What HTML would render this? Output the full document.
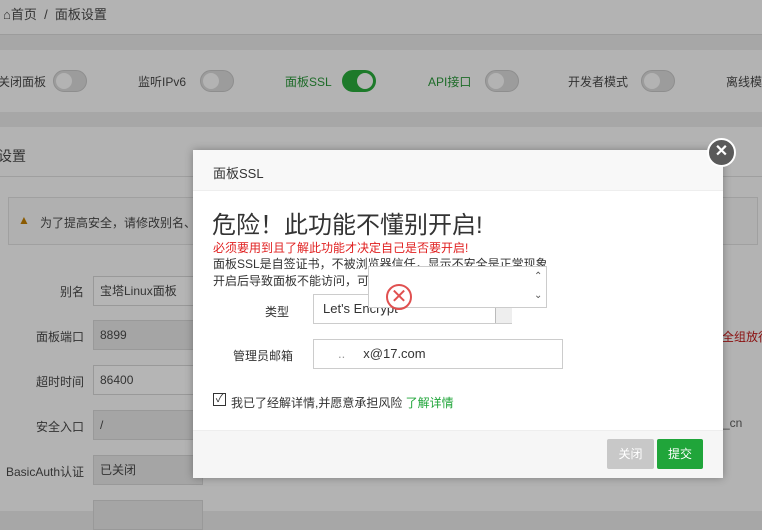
<!DOCTYPE html>
<html><head><meta charset="utf-8"><style>
*{box-sizing:border-box;margin:0;padding:0}
body{width:762px;height:511px;overflow:hidden;position:relative;background:#a7a7a7;font-family:"Liberation Sans","Noto Sans CJK SC",sans-serif;font-size:12px;color:#333}
.abs{position:absolute;white-space:nowrap}
.light{background:#b3b3b3}
.tg{position:absolute;top:70px;width:34px;height:22px;border-radius:11px;background:#9c9c9c;border:1px solid #8e8e8e}
.tg::after{content:"";position:absolute;left:2px;top:2px;width:16px;height:16px;border-radius:50%;background:#b3b3b3}
.tg.on{background:#1d7a2a;border-color:#1d7a2a}
.tg.on::after{left:14px}
.lbl{position:absolute;top:73px;font-size:12px;color:#333;white-space:nowrap}
.fl{position:absolute;right:678px;font-size:12px;color:#333;text-align:right;white-space:nowrap}
.fi{position:absolute;left:93px;width:110px;height:30px;border:1px solid #999;background:#b5b5b5;padding-left:6px;line-height:28px;font-size:12px;color:#333}
.fi.d{background:#a5a5a5}
</style></head><body>
<div class="abs light" style="left:0;top:0;width:762px;height:35px;border-bottom:1px solid #9c9c9c"></div>
<div class="abs" style="left:3px;top:4px;font-size:13px;color:#333">⌂首页 &nbsp;/&nbsp; 面板设置</div>
<div class="abs light" style="left:0;top:50px;width:762px;height:62px"></div>
<div class="lbl" style="left:-2px">关闭面板</div><div class="tg" style="left:53px"></div>
<div class="lbl" style="left:138px">监听IPv6</div><div class="tg" style="left:200px"></div>
<div class="lbl" style="left:285px;color:#1d6b28">面板SSL</div><div class="tg on" style="left:342px"></div>
<div class="lbl" style="left:428px;color:#1d6b28">API接口</div><div class="tg" style="left:485px"></div>
<div class="lbl" style="left:568px">开发者模式</div><div class="tg" style="left:641px"></div>
<div class="lbl" style="left:726px">离线模</div>
<div class="abs light" style="left:0;top:127px;width:762px;height:384px"></div>
<div class="abs" style="left:0;top:176px;width:762px;height:1px;background:#9f9f9f"></div>
<div class="abs" style="left:-2px;top:146px;font-size:14px">设置</div>
<div class="abs" style="left:8px;top:197px;width:750px;height:48px;border:1px solid #a0a0a0;background:#b0b0b0"></div>
<div class="abs" style="left:18px;top:213px;color:#8a5a00">▲</div>
<div class="abs" style="left:40px;top:214px">为了提高安全，请修改别名、</div>
<div class="fl" style="top:283px">别名</div><div class="fi" style="top:276px">宝塔Linux面板</div>
<div class="fl" style="top:328px">面板端口</div><div class="fi d" style="top:320px">8899</div>
<div class="fl" style="top:373px">超时时间</div><div class="fi" style="top:365px">86400</div>
<div class="fl" style="top:418px">安全入口</div><div class="fi d" style="top:410px">/</div>
<div class="fl" style="top:463px">BasicAuth认证</div><div class="fi d" style="top:455px">已关闭</div>
<div class="fi d" style="top:500px"></div>
<div class="abs" style="left:722px;top:328px;color:#8b1010;font-size:12px">全组放行</div>
<div class="abs" style="left:723px;top:416px;color:#444">_cn</div>

<div class="abs" style="left:193px;top:150px;width:530px;height:328px;background:#fff;box-shadow:0 0 8px rgba(0,0,0,.3)">
 <div style="height:41px;background:#f8f8f8;border-bottom:1px solid #eee;padding:13px 0 0 20px;font-size:13px;color:#333">面板SSL</div>
 <div class="abs" style="left:19px;top:61px;font-size:24px;color:#333;line-height:30px">危险！此功能不懂别开启!</div>
 <div class="abs" style="left:20px;top:89px;font-size:12px;color:#e02020">必须要用到且了解此功能才决定自己是否要开启!</div>
 <div class="abs" style="left:20px;top:106px;font-size:12px;color:#333;line-height:17px">面板SSL是自签证书，不被浏览器信任，显示不安全是正常现象<br>开启后导致面板不能访问，可</div>
 <div class="abs" style="left:72px;top:153px">类型</div>
 <div class="abs" style="left:120px;top:144px;width:199px;height:30px;border:1px solid #ccc;padding-left:9px;line-height:28px;font-size:13px">Let's Encrypt</div>
 <div class="abs" style="left:302px;top:145px;width:17px;height:28px;background:#eee;border-left:1px solid #bbb"></div>
 <div class="abs" style="left:175px;top:116px;width:179px;height:42px;background:#fff;border:1px solid #ccc"></div>
 <div class="abs" style="left:341px;top:117px;font-size:10px;color:#555;line-height:19px">⌃<br>⌄</div>
 <div class="abs" style="left:193px;top:134px;width:26px;height:26px;border:2px solid #e05050;border-radius:50%;color:#e05050;font-size:20px;line-height:22px;text-align:center">✕</div>
 <div class="abs" style="left:40px;top:197px">管理员邮箱</div>
 <div class="abs" style="left:120px;top:189px;width:250px;height:30px;border:1px solid #ccc;padding-left:24px;line-height:28px;font-size:13px"><span style="color:#999">..</span>&nbsp;&nbsp;&nbsp;&nbsp;&nbsp;x@17.com</div>
 <div class="abs" style="left:20px;top:243px;width:13px;height:13px;border:1px solid #333;font-size:11px;line-height:11px;text-align:center">✓</div>
 <div class="abs" style="left:38px;top:244px">我已了经解详情,并愿意承担风险 <span style="color:#20a53a">了解详情</span></div>
 <div class="abs" style="left:0;top:280px;width:530px;height:48px;background:#f6f6f6;border-top:1px solid #eee"></div>
 <div class="abs" style="left:414px;top:289px;width:47px;height:30px;background:#c8c8c8;color:#fff;border-radius:2px;text-align:center;line-height:30px">关闭</div>
 <div class="abs" style="left:464px;top:289px;width:46px;height:30px;background:#20a53a;color:#fff;border-radius:2px;text-align:center;line-height:30px">提交</div>
</div>
<div class="abs" style="left:707px;top:138px;width:29px;height:29px;border-radius:50%;background:#5a5a5a;border:2px solid #fff;color:#fff;text-align:center;line-height:24px;font-size:16px;font-weight:bold">✕</div>
</body></html>
